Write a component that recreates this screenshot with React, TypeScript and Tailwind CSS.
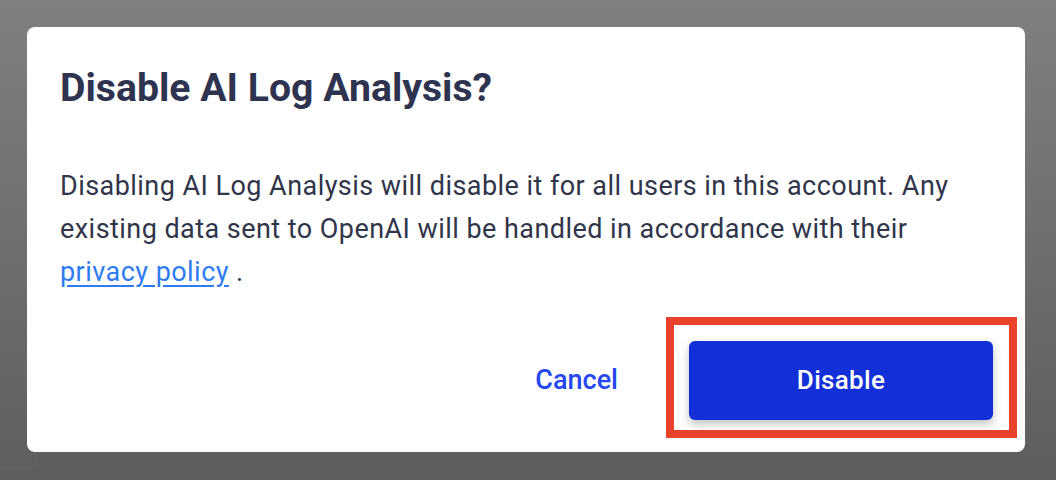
import React from 'react';

export default function App() {
  return (
    <div className="relative w-[1056px] h-[480px] overflow-hidden bg-[#f4f4f5]" style={{ fontFamily: 'Roboto, "Noto Sans", sans-serif' }}>
      {/* page behind the dialog */}
      <div className="pt-[152px] pl-0">
        <div className="w-[40px] h-[320px] border-t border-r border-b border-[#c4c4c8] rounded-br-lg bg-white" />
      </div>

      {/* backdrop */}
      <div className="absolute inset-0 bg-gradient-to-b from-[#7a7a7b]/95 to-[#565658]/95 p-[27px] pb-[28px] pr-[31px]">
        <div className="h-full bg-white rounded-lg pl-[33px] pr-[32px] pt-[37px] flex flex-col">
          <h2 className="text-[39.2px] leading-[48px] font-bold text-[#2e3350]">
            Disable AI Log Analysis?
          </h2>

          <p className="mt-[53px] text-[27px] leading-[43px] tracking-[0.45px] text-[#30354a]">
            Disabling AI Log Analysis will disable it for all users in this account. Any existing data sent to
            OpenAI will be handled in accordance with their{' '}
            <a href="#" className="text-[#2f7bf2] underline underline-offset-4">privacy policy</a> .
          </p>

          <div className="mt-[47px] flex items-center justify-end gap-[63px]">
            <button className="text-[27px] font-medium text-[#2447ef] px-2 py-2">Cancel</button>
            <div className="relative">
              <button className="w-[304px] h-[79px] rounded-md bg-[#1330d8] text-white text-[26px] tracking-[0.3px] font-medium shadow-[0_4px_10px_rgba(0,0,0,0.25)]">
                Disable
              </button>
              {/* highlight annotation */}
              <span className="absolute -left-[23px] -top-[24px] -right-[24px] -bottom-[18px] border-[8px] border-[#e9412a] pointer-events-none" />
            </div>
          </div>
        </div>
      </div>
    </div>
  );
}
